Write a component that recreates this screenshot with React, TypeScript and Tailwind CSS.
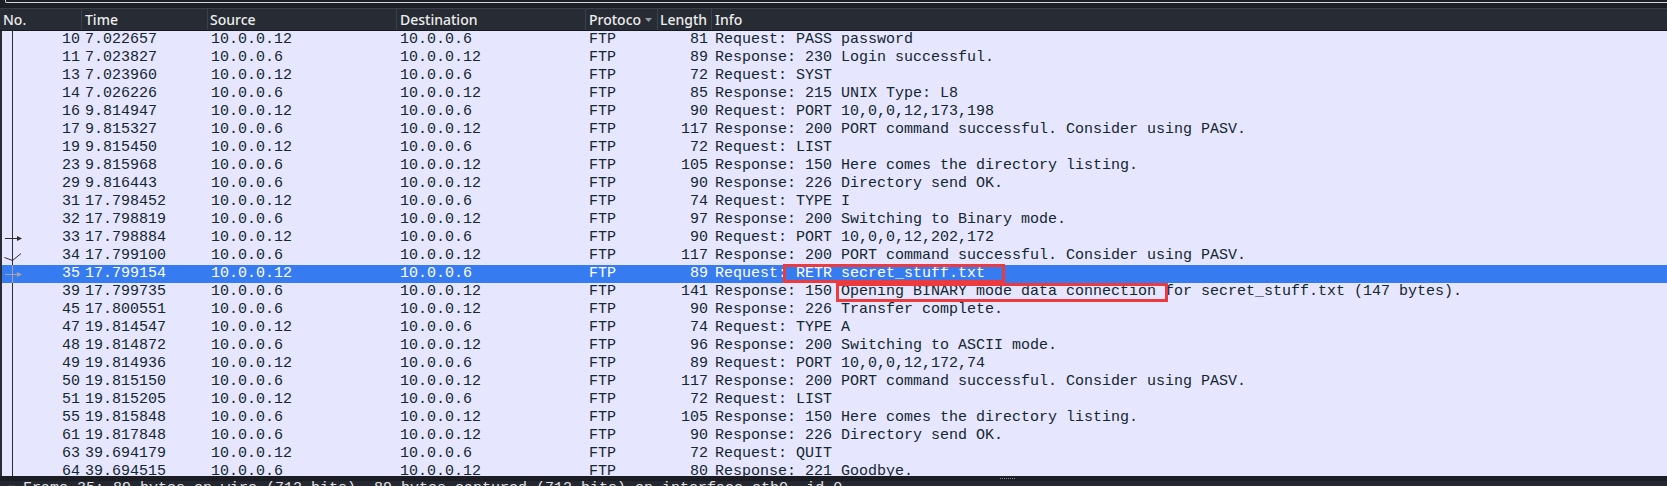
import React from "react";

type Row = [string, string, string, string, string, string, string];

const rows: Row[] = [
  ["10", "7.022657", "10.0.0.12", "10.0.0.6", "FTP", "81", "Request: PASS password"],
  ["11", "7.023827", "10.0.0.6", "10.0.0.12", "FTP", "89", "Response: 230 Login successful."],
  ["13", "7.023960", "10.0.0.12", "10.0.0.6", "FTP", "72", "Request: SYST"],
  ["14", "7.026226", "10.0.0.6", "10.0.0.12", "FTP", "85", "Response: 215 UNIX Type: L8"],
  ["16", "9.814947", "10.0.0.12", "10.0.0.6", "FTP", "90", "Request: PORT 10,0,0,12,173,198"],
  ["17", "9.815327", "10.0.0.6", "10.0.0.12", "FTP", "117", "Response: 200 PORT command successful. Consider using PASV."],
  ["19", "9.815450", "10.0.0.12", "10.0.0.6", "FTP", "72", "Request: LIST"],
  ["23", "9.815968", "10.0.0.6", "10.0.0.12", "FTP", "105", "Response: 150 Here comes the directory listing."],
  ["29", "9.816443", "10.0.0.6", "10.0.0.12", "FTP", "90", "Response: 226 Directory send OK."],
  ["31", "17.798452", "10.0.0.12", "10.0.0.6", "FTP", "74", "Request: TYPE I"],
  ["32", "17.798819", "10.0.0.6", "10.0.0.12", "FTP", "97", "Response: 200 Switching to Binary mode."],
  ["33", "17.798884", "10.0.0.12", "10.0.0.6", "FTP", "90", "Request: PORT 10,0,0,12,202,172"],
  ["34", "17.799100", "10.0.0.6", "10.0.0.12", "FTP", "117", "Response: 200 PORT command successful. Consider using PASV."],
  ["35", "17.799154", "10.0.0.12", "10.0.0.6", "FTP", "89", "Request: RETR secret_stuff.txt"],
  ["39", "17.799735", "10.0.0.6", "10.0.0.12", "FTP", "141", "Response: 150 Opening BINARY mode data connection for secret_stuff.txt (147 bytes)."],
  ["45", "17.800551", "10.0.0.6", "10.0.0.12", "FTP", "90", "Response: 226 Transfer complete."],
  ["47", "19.814547", "10.0.0.12", "10.0.0.6", "FTP", "74", "Request: TYPE A"],
  ["48", "19.814872", "10.0.0.6", "10.0.0.12", "FTP", "96", "Response: 200 Switching to ASCII mode."],
  ["49", "19.814936", "10.0.0.12", "10.0.0.6", "FTP", "89", "Request: PORT 10,0,0,12,172,74"],
  ["50", "19.815150", "10.0.0.6", "10.0.0.12", "FTP", "117", "Response: 200 PORT command successful. Consider using PASV."],
  ["51", "19.815205", "10.0.0.12", "10.0.0.6", "FTP", "72", "Request: LIST"],
  ["55", "19.815848", "10.0.0.6", "10.0.0.12", "FTP", "105", "Response: 150 Here comes the directory listing."],
  ["61", "19.817848", "10.0.0.6", "10.0.0.12", "FTP", "90", "Response: 226 Directory send OK."],
  ["63", "39.694179", "10.0.0.12", "10.0.0.6", "FTP", "72", "Request: QUIT"],
  ["64", "39.694515", "10.0.0.6", "10.0.0.12", "FTP", "80", "Response: 221 Goodbye."],
];

function Indicator({ no, selected }: { no: string; selected: boolean }) {
  const c = selected ? "#a3a3a8" : "#2b2d33";
  return (
    <svg className="absolute left-0 top-0" width="24" height="18" viewBox="0 0 24 18">
      <line x1="10.5" y1="0" x2="10.5" y2="18" stroke={c} strokeWidth="1" />
      {(no === "33" || no === "35") && (
        <>
          <line x1="3" y1="9.5" x2="16" y2="9.5" stroke={c} strokeWidth="1" />
          <polygon points="15,7 20,9.5 15,12" fill={c} />
        </>
      )}
      {no === "34" && (
        <polyline points="2.5,10.5 10.5,13.5 19,6.5" fill="none" stroke={c} strokeWidth="1" />
      )}
    </svg>
  );
}

export default function App() {
  return (
    <div className="w-[1667px] h-[486px] overflow-hidden bg-[#1d1f26] flex flex-col">
      {/* filter bar remnant */}
      <div className="h-[8px] shrink-0 pl-[5px]">
        <div className="h-[3px] border-l border-b border-[#d6d6d6] rounded-bl-[2px]" />
      </div>

      {/* column header */}
      <div className="h-[23px] shrink-0 flex bg-[#272b34] border-t border-t-[#3a3e48] border-b border-b-[#17181d] text-[#ededed] text-[14px] leading-[21px] font-medium font-['Noto_Sans',sans-serif]">
        <div className="w-[82px] shrink-0 border-r border-[#3c404a] pl-[3px]">No.</div>
        <div className="w-[126px] shrink-0 border-r border-[#3c404a] pl-[3px]">Time</div>
        <div className="w-[189px] shrink-0 border-r border-[#3c404a] pl-[2px]">Source</div>
        <div className="w-[189px] shrink-0 border-r border-[#3c404a] pl-[3px]">Destination</div>
        <div className="w-[72px] shrink-0 border-r border-[#3c404a] pl-[3px] flex items-center overflow-hidden">
          <span>Protoco</span>
          <svg className="ml-[4px] shrink-0" width="7" height="4" viewBox="0 0 7 4">
            <polygon points="0,0 7,0 3.5,4" fill="#9a9ca3" />
          </svg>
        </div>
        <div className="w-[54px] shrink-0 border-r border-[#3c404a] pl-[2px]">Length</div>
        <div className="flex-1 pl-[3px]">Info</div>
      </div>

      {/* packet list */}
      <div className="h-[445px] shrink-0 overflow-hidden bg-[#e7e6ff] border-l-2 border-[#2a2c33] relative font-['Liberation_Mono',monospace] text-[15px] leading-[18px] text-[#12272e]">
        {rows.map((r) => {
          const sel = r[0] === "35";
          return (
            <div
              key={r[0]}
              className={
                "h-[18px] flex whitespace-pre " +
                (sel ? "bg-[#367bf0] text-white" : "")
              }
            >
              <div className="w-[79px] shrink-0 relative text-right pr-[1px]">
                <Indicator no={r[0]} selected={sel} />
                {r[0]}
              </div>
              <div className="w-[126px] shrink-0 pl-[4px]">{r[1]}</div>
              <div className="w-[189px] shrink-0 pl-[4px]">{r[2]}</div>
              <div className="w-[189px] shrink-0 pl-[4px]">{r[3]}</div>
              <div className="w-[72px] shrink-0 pl-[4px]">{r[4]}</div>
              <div className="w-[54px] shrink-0 text-right pr-[3px]">{r[5]}</div>
              <div className="flex-1 pl-[4px]">{r[6]}</div>
            </div>
          );
        })}

        {/* annotation boxes */}
        <div className="absolute left-[781px] top-[233px] w-[222px] h-[19px] border-[3px] border-[#ec3a3f]" />
        <div className="absolute left-[834px] top-[252px] w-[332px] h-[19px] border-[3px] border-[#ec3a3f]" />
      </div>

      {/* splitter */}
      <div className="h-[5px] shrink-0 bg-[#1c1d24] flex justify-center">
        <div className="ml-[348px] mt-[2px] w-[15px] h-[1px] border-t border-dotted border-[#8a8d96]" />
      </div>

      {/* details pane */}
      <div className="flex-1 bg-[#24272f] flex items-start pl-[8px] pt-[2px] font-['Liberation_Mono',monospace] text-[15px] leading-[12px] text-[#e2e2e6] whitespace-pre">
        <div className="w-[7px] h-[6px] mt-[2px] bg-[#3a3d46] mr-[8px]" />
        <span>Frame 35: 89 bytes on wire (712 bits), 89 bytes captured (712 bits) on interface eth0, id 0</span>
      </div>
    </div>
  );
}
